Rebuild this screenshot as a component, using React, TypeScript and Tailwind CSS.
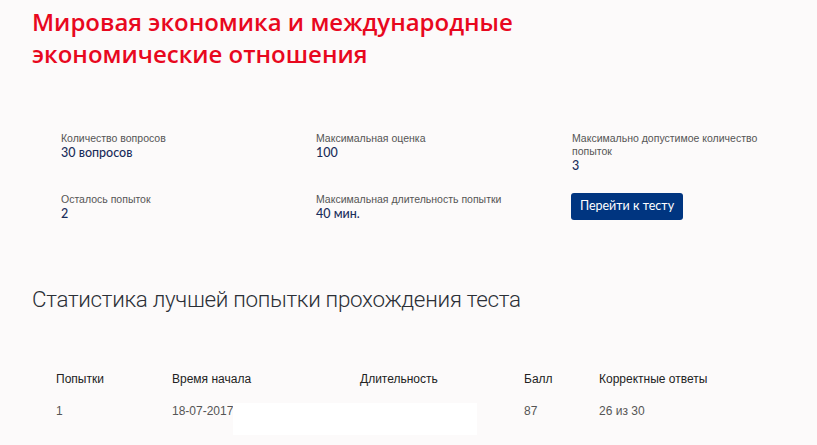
export default function App() {
  const info = [
    { label: 'Количество вопросов', value: '30 вопросов' },
    { label: 'Максимальная оценка', value: '100' },
    { label: 'Максимально допустимое количество попыток', value: '3' },
    { label: 'Осталось попыток', value: '2' },
    { label: 'Максимальная длительность попытки', value: '40 мин.' },
  ]

  return (
    <div className="min-h-screen w-[817px] h-[445px] overflow-hidden bg-[#fcfafa] font-['Open_Sans',sans-serif]">
      <h1 className="pl-[32px] pt-[6px] text-[24px] leading-[32px] font-semibold text-[#e8081e]">
        Мировая экономика и международные
        <br />
        экономические отношения
      </h1>

      {/* Test summary */}
      <div className="mt-[62px] pl-[61px] grid grid-cols-[255px_256px_190px] grid-rows-[61px_auto] font-['Lato',sans-serif]">
        {info.map((item) => (
          <div key={item.label}>
            <div className="text-[10.5px] leading-[13px] text-[#555] font-['Liberation_Sans',sans-serif]">{item.label}</div>
            <div className="text-[12.5px] leading-[15px] font-medium text-[#1a2d5a]">{item.value}</div>
          </div>
        ))}
        <div className="ml-[-1px] mt-[-1px]">
          <button className="h-[27px] w-[112px] rounded-[3px] bg-[#003580] text-[12.5px] text-white">
            Перейти к тесту
          </button>
        </div>
      </div>

      {/* Statistics */}
      <h2 className="mt-[62px] pl-[32px] text-[22.4px] font-light text-[#2b2f36] font-['Roboto',sans-serif] tracking-[-0.3px]">
        Статистика лучшей попытки прохождения теста
      </h2>

      <div className="mt-[51px] pl-[56px] text-[12px] leading-[22px] font-['Liberation_Sans',sans-serif]">
        <div className="grid grid-cols-[116px_188px_164px_75px_1fr] text-[#222]">
          <span>Попытки</span>
          <span>Время начала</span>
          <span>Длительность</span>
          <span>Балл</span>
          <span>Корректные ответы</span>
        </div>
        <div className="mt-[10px] grid grid-cols-[116px_188px_164px_75px_1fr] items-start text-[#555]">
          <span>1</span>
          <span className="flex items-start whitespace-nowrap">
            18-07-2017
            <span className="mt-[3px] h-[32px] w-[244px] bg-white shrink-0" />
          </span>
          <span />
          <span>87</span>
          <span>26 из 30</span>
        </div>
      </div>
    </div>
  )
}
